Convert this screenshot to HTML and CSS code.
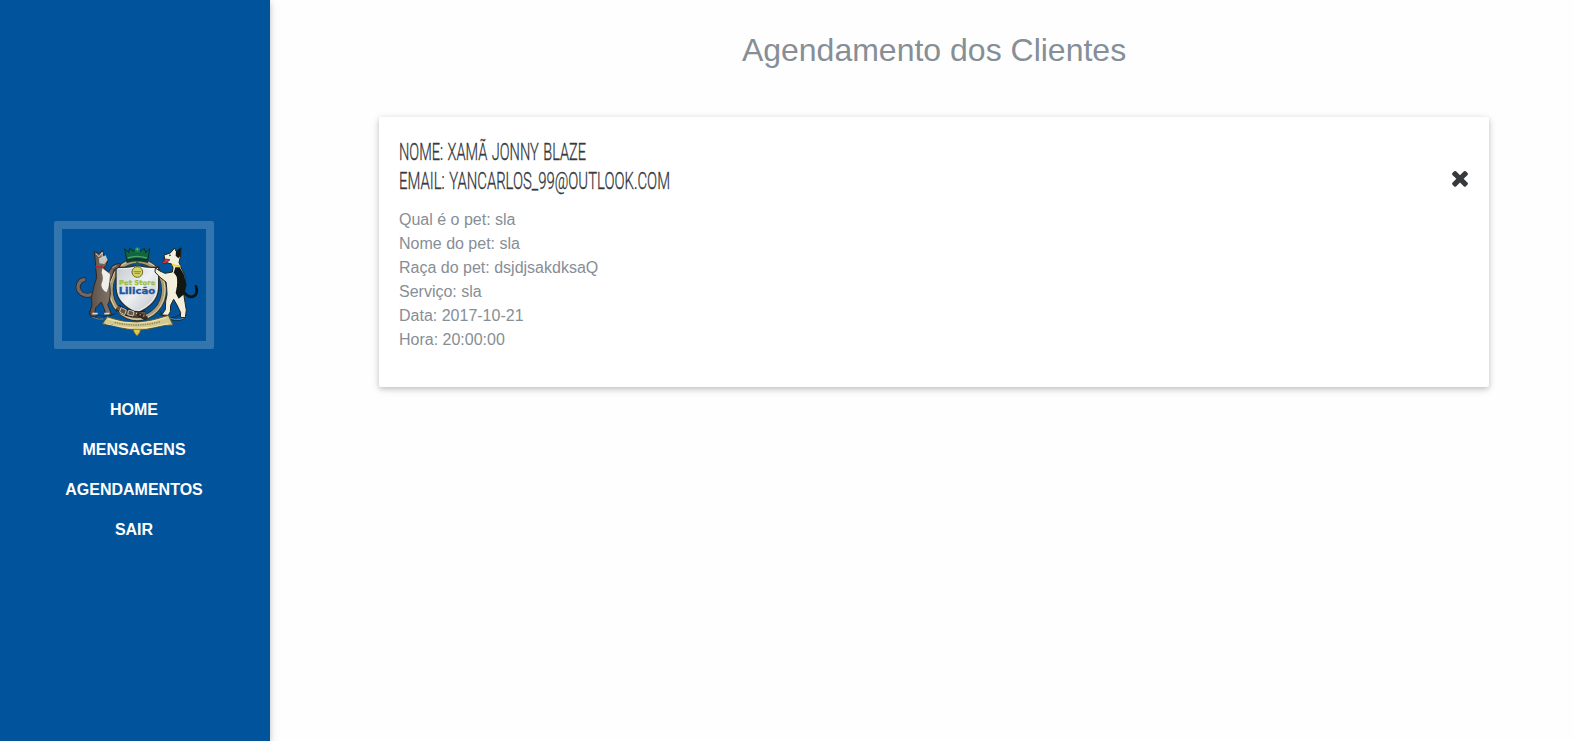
FILE: index.html
```html
<!DOCTYPE html>
<html lang="pt-BR">
<head>
<meta charset="utf-8">
<title>Agendamento dos Clientes</title>
<link rel="stylesheet" href="styles.css">
</head>
<body>
<div class="layout">
  <aside class="sidebar">
    <div class="logo-frame">
      <svg class="logo" viewBox="36 42 432 336" role="img" aria-label="Pet Store Lilicão">
        <defs>
          <linearGradient id="shield" x1="0" y1="0" x2="1" y2="1">
            <stop offset="0" stop-color="#c3c9cf"/><stop offset=".5" stop-color="#eef0f2"/><stop offset="1" stop-color="#b9bec4"/>
          </linearGradient>
          <linearGradient id="fur" x1="0" y1="0" x2="1" y2="0">
            <stop offset="0" stop-color="#5b5048"/><stop offset=".6" stop-color="#7d7067"/><stop offset="1" stop-color="#564a43"/>
          </linearGradient>
        </defs>
        <!-- flourishes below the animals -->
        <g fill="none" stroke="#172a35" stroke-width="3">
          <path d="M118 288q-4 22 38 24M126 290q30 24 70 6M150 312q-28-6-32-24M326 296q36 24 66 2M352 312q40 10 54-4M330 288q10 30 62 26"/>
        </g>
        <path d="M120 300q14 14 40 12M350 304q28 18 54 4" fill="none" stroke="#8faab9" stroke-width="2"/>
        <!-- wreath and shield -->
        <ellipse cx="262" cy="224" rx="80" ry="86" fill="none" stroke="#31302a" stroke-width="17"/>
        <ellipse cx="262" cy="224" rx="80" ry="86" fill="none" stroke="#a99b76" stroke-width="12"/>
        <ellipse cx="262" cy="224" rx="83" ry="89" fill="none" stroke="#ded2a5" stroke-width="3"/>
        <path d="M198 156q32 4 64-5q32 9 64 5v64q-2 49-64 74q-62-25-64-74z" fill="url(#shield)" stroke="#292d2e" stroke-width="4"/>
        <path d="M203 161q30 3 59-5q30 8 59 5v58q-2 45-59 70" fill="none" stroke="#fff" stroke-width="2"/>
        <!-- crown -->
        <path d="M224 101l12 12 3-13 12 9 10-12 10 12 12-9 4 13 12-12-5 33q-32-7-64 0z" fill="#12663f" stroke="#092c23" stroke-width="3"/>
        <path d="M233 129q28-10 57 0" fill="none" stroke="#48a36d" stroke-width="4"/>
        <path d="M229 141q32-12 66 0" fill="none" stroke="#0c3c2a" stroke-width="7"/>
        <circle cx="262" cy="104" r="8" fill="#168154"/><circle cx="262" cy="103" r="3" fill="#68bd98"/>
        <path d="M262 139v18" stroke="#166744" stroke-width="7"/>
        <circle cx="262" cy="171" r="16" fill="#d5d265" stroke="#6c6d25" stroke-width="3"/>
        <path d="M251 170h22M254 175h16" stroke="#8e8b38" stroke-width="3"/>
        <!-- cat -->
        <path d="M130 236q-18 10-35 0q-15-13-9-29q5-12 16-13" fill="none" stroke="#252422" stroke-width="14" stroke-linecap="round"/>
        <path d="M130 236q-18 10-35 0q-15-13-9-29q5-12 16-13" fill="none" stroke="#75675f" stroke-width="10" stroke-linecap="round"/>
        <path d="M133 110l15 6 9-9 5 16 12 10-6 18-7 8 15 12 12-19 17-7 8 3-6 9-14 7-7 20-7 16 2 37-3 22-5 10 9 22 4 9-18-2-6-17-8-20-17 18-2 17 7 7-20 1-3-10 7-25-2-22 9-37 7-22-3-30-1-18z" fill="url(#fur)" stroke="#2d2824" stroke-width="3"/>
        <path d="M157 160l23 18-2 23q-3 23-9 31-15-9-15-24 9-20 1-34z" fill="#f1eeea"/>
        <path d="M147 130l20-9 6 14-10 12-15-2z" fill="#c2c7c1"/>
        <path d="M137 115l10 10 10-13-1 13 8 6" fill="none" stroke="#d8d6d0" stroke-width="3"/>
        <path d="M136 154q12 6 23 0" fill="none" stroke="#bc2628" stroke-width="6"/>
        <path d="M127 296h16M163 296h15" stroke="#ded9d2" stroke-width="5"/>
        <path d="M187 158l13-7" stroke="#a79a91" stroke-width="3"/>
        <!-- dog -->
        <path d="M402 232q15 18 29 12 14-8 7-30" fill="none" stroke="#101411" stroke-width="8" stroke-linecap="round"/>
        <path d="M342 120l19-6 13-15 4 10 15-11-1 24-5 20 5 13 12 26 4 30-7 25 4 26 4 23-3 23-15-1 1-14-11-23-10-17-9 18-1 19-6 11-20-1 11-16 1-25 4-20-1-21-2-17-19-15-14-15 1-12 14 9 15 7 22-4 2-13-4-11-19-5z" fill="#f1eedc" stroke="#20231e" stroke-width="3"/>
        <path d="M378 109l15-11-1 24-7 8-8-8zM376 157l13 0 13 22 7 31-6 27-17 14-9-17 4-22-1-26-9-12z" fill="#121711"/>
        <path d="M373 175q14 16 6 42-13-13-12-36z" fill="#f5f0dc"/>
        <path d="M339 131l21 3-11 10q-12 5-13-2l8-5z" fill="#db3447" stroke="#271e22" stroke-width="2"/>
        <circle cx="360" cy="121" r="2.5" fill="#171916"/>
        <path d="M366 148q13 7 25 4" fill="none" stroke="#e3d93d" stroke-width="6"/>
        <!-- belt -->
        <path d="M202 277q33 27 85 20" fill="none" stroke="#211e19" stroke-width="20"/>
        <path d="M202 277q33 27 85 20" fill="none" stroke="#665242" stroke-width="13"/>
        <path d="M213 278l16 7-5 14-15-8zM236 286l16 4-3 13-16-4z" fill="none" stroke="#c5c4bd" stroke-width="3"/>
        <path d="M262 296l29 16" stroke="#312a24" stroke-width="13"/>
        <path d="M258 295h3M269 299h3M280 303h3" stroke="#d0c5a7" stroke-width="4"/>
        <!-- ribbon -->
        <path d="M157 327l15-22q39 13 64 16 25 3 47-1 39-8 72-19l14 29-30 2-20 4q-57 19-114 0l-20-7z" fill="#d3c88e" stroke="#60572f" stroke-width="3"/>
        <path d="M173 312q89 26 175-4M167 326q95 27 188 0" fill="none" stroke="#f0e9b6" stroke-width="3"/>
        <path d="M194 322q69 17 137-2" fill="none" stroke="#887f50" stroke-width="4" stroke-dasharray="4 3"/>
        <path d="M249 343h23l-3 10-8 10-8-10z" fill="#ddc949" stroke="#6c642b" stroke-width="2"/>
        <text class="logo-store" x="207" y="210" textLength="109" lengthAdjust="spacingAndGlyphs">Pet Store</text>
        <text class="logo-name" x="206" y="237" textLength="110" lengthAdjust="spacingAndGlyphs">Lilicão</text>
      </svg>
    </div>
    <nav class="menu">
      <a>HOME</a>
      <a>MENSAGENS</a>
      <a>AGENDAMENTOS</a>
      <a>SAIR</a>
    </nav>
  </aside>
  <main class="content">
    <h1 class="title">Agendamento dos Clientes</h1>
    <section class="card">
      <header class="card-header">
        <h2 class="client">
          <svg class="client-lines" width="280" height="58">
            <text x="0" y="23" textLength="187" lengthAdjust="spacingAndGlyphs">NOME: XAMÃ JONNY BLAZE</text>
            <text x="0" y="52" textLength="271" lengthAdjust="spacingAndGlyphs">EMAIL: YANCARLOS_99@OUTLOOK.COM</text>
          </svg>
        </h2>
        <svg class="close" viewBox="0 0 1792 1792" aria-label="Fechar"><path d="M1490 1322q0 40-28 68l-136 136q-28 28-68 28t-68-28l-294-294-294 294q-28 28-68 28t-68-28l-136-136q-28-28-28-68t28-68l294-294-294-294q-28-28-28-68t28-68l136-136q28-28 68-28t68 28l294 294 294-294q28-28 68-28t68 28l136 136q28 28 28 68t-28 68l-294 294 294 294q28 28 28 68z"/></svg>
      </header>
      <p class="details">Qual é o pet: sla<br>Nome do pet: sla<br>Raça do pet: dsjdjsakdksaQ<br>Serviço: sla<br>Data: 2017-10-21<br>Hora: 20:00:00</p>
    </section>
  </main>
</div>
</body>
</html>
```
FILE: styles.css
```css
* { box-sizing: border-box; }
body {
  margin: 0;
  background: #fefefe;
  color: #868e96;
  font: 16px/24px "Liberation Sans", Arial, sans-serif;
}
.layout { display: flex; height: 741px; }
.sidebar {
  width: 270px;
  padding: 221px 2px 0 0;
  display: flex;
  flex-direction: column;
  align-items: center;
  gap: 49px;
  background: #01549b;
  box-shadow: 0 2px 5px rgba(0,0,0,.16), 0 2px 10px rgba(0,0,0,.12);
}
.logo-frame {
  width: 160px;
  height: 128px;
  border: 8px solid rgba(255,255,255,.2);
  border-radius: 2px;
}
.logo { display: block; width: 144px; height: 112px; }
.logo-store {
  font: bold 20px "DejaVu Sans", sans-serif;
  fill: #a6cc39;
  stroke: #73973b;
  stroke-width: .6px;
}
.logo-name {
  font: bold 25px "DejaVu Sans", sans-serif;
  fill: #1d57a5;
  stroke: #1d57a5;
  stroke-width: 1px;
}
.menu {
  display: flex;
  flex-direction: column;
  align-items: center;
  gap: 16px;
  color: #fff;
  font-weight: bold;
}
.content { flex: 1; padding: 31px 85px 0 109px; }
.title {
  margin: 0 0 48px;
  font-size: 32px;
  font-weight: normal;
  line-height: 38px;
  text-align: center;
}
.card {
  height: 270px;
  padding: 20px;
  border-radius: 2px;
  background: #fff;
  box-shadow: 0 2px 5px rgba(0,0,0,.16), 0 2px 10px rgba(0,0,0,.12);
}
.card-header {
  display: flex;
  justify-content: space-between;
  align-items: flex-end;
  height: 58px;
  margin-bottom: 13px;
}
.client { margin: 0; height: 58px; }
.client-lines {
  display: block;
  overflow: visible;
  fill: #343a40;
  stroke: #343a40;
  stroke-width: .35px;
  font: 300 24.5px Roboto, sans-serif;
  word-spacing: 1.5px;
}
.close { width: 24px; height: 24px; margin: 0 -3px 5px 0; fill: #373a3c; }
.details { margin: 0; }
```
